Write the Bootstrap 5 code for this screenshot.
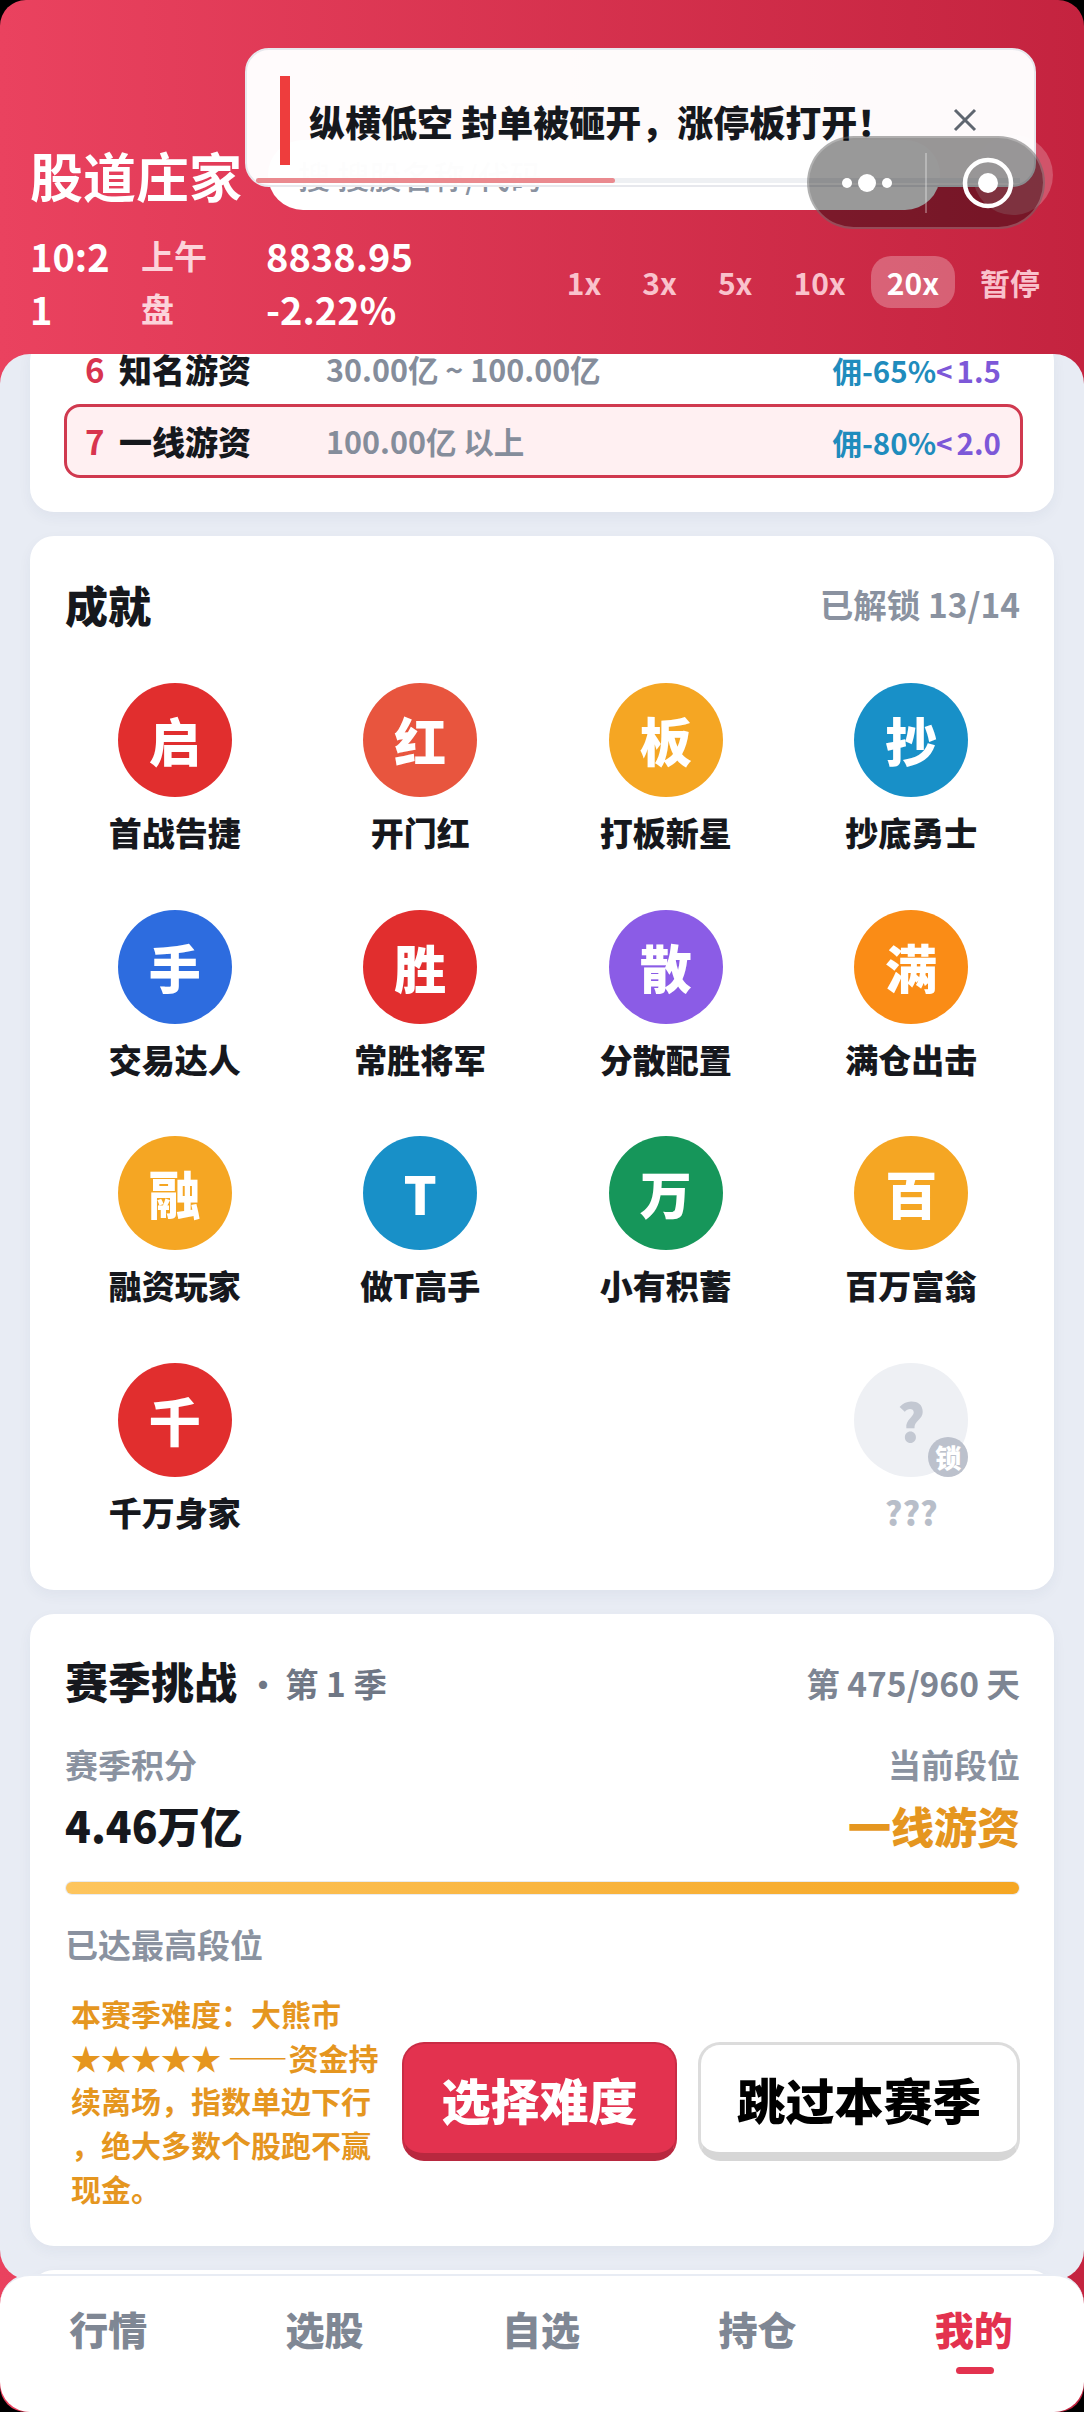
<!DOCTYPE html>
<html lang="zh-CN">
<head>
  <meta charset="UTF-8" />
  <meta name="viewport" content="width=device-width, initial-scale=1" />
  <title>股道庄家</title>
  <link href="https://cdn.jsdelivr.net/npm/bootstrap@5.3.2/dist/css/bootstrap.min.css" rel="stylesheet" />
  <style>
    body {
      background: #000;
      font-family: "Noto Sans CJK SC", "Noto Sans", sans-serif;
      color: #16181d;
      font-weight: 700;
    }
    .app-root {
      position: relative;
      width: 1084px;
      height: 2412px;
      overflow: hidden;
      border-radius: 26px;
      background: linear-gradient(90deg, #ea425f, #c4233f);
    }
    /* header */
    .top-head { height: 354px; padding: 140px 28px 0 30px; color: #fff; }
    .brand-row { height: 70px; }
    .brand-name { font-size: 53px; line-height: 70px; width: 238px; flex-shrink: 0; white-space: nowrap; }
    .search-pill {
      width: 672px; height: 70px; flex-shrink: 0; border-radius: 35px; background: #fff;
      color: #8a92a0; font-size: 32px; padding-left: 30px; line-height: 70px; font-weight: 500;
    }
    .mini-round {
      width: 80px; height: 80px; flex-shrink: 0; margin-left: 33px; border-radius: 50%;
      background: rgba(255, 255, 255, .22);
    }
    .stat-row { margin-top: 19px; line-height: 53px; font-size: 38px; }
    .stat-time { width: 111px; }
    .stat-part { width: 125px; font-size: 33px; color: #fcd3da; }
    .speed-row { gap: 9px; font-size: 30px; color: #f9c2cc; line-height: 52px; }
    .speed-item { padding: 0 16px; border-radius: 20px; height: 52px; }
    .speed-item.is-on { background: rgba(255, 255, 255, .27); color: #fff; }
    /* toast + capsule */
    .notice-box {
      position: absolute; left: 245px; top: 48px; width: 791px; height: 139px; z-index: 5;
      background: rgba(255, 255, 255, .98); border: 2px solid #e7e8ed; border-radius: 24px;
      padding: 24px 0 0 33px;
    }
    .notice-bar { width: 10px; height: 89px; background: #ee3d3d; flex-shrink: 0; }
    .notice-text { font-size: 36px; font-weight: 900; margin-left: 19px; white-space: nowrap; line-height: 89px; padding-top: 3px; }
    .notice-close { margin-left: auto; margin-right: 57px; display: flex; }
    .notice-track { position: absolute; left: 9px; right: 14px; bottom: 2px; height: 5px; background: #eef0f3; }
    .notice-fill { height: 100%; background: #ea8a8f; border-radius: 3px; }
    .wx-capsule {
      position: absolute; left: 807px; top: 136px; width: 238px; height: 93px; z-index: 6;
      background: rgba(0, 0, 0, .4); border: 2px solid rgba(255, 255, 255, .22); border-radius: 47px;
    }
    .wx-half { width: 50%; }
    .wx-half-ring { padding-left: 6px; }
    .wx-line { width: 2px; height: 60px; background: rgba(255, 255, 255, .3); flex-shrink: 0; }
    /* panel */
    .main-panel {
      height: 1926px; overflow: hidden; background: #e8ecf4; border-radius: 30px;
      padding: 0 30px;
    }
    .sheet {
      border: 0; border-radius: 24px; background: #fff; margin-bottom: 24px;
      box-shadow: 0 5px 14px rgba(40, 50, 90, .05);
      padding-left: 35px; padding-right: 34px;
    }
    .sheet-rank { margin-top: -17px; padding-left: 34px; padding-right: 31px; padding-bottom: 34px; }
    .rank-line { height: 66px; margin-bottom: 1px; padding: 0 22px 0 21px; }
    .rank-line.is-current { height: 74px; margin-bottom: 0; border: 3px solid #d0394f; border-radius: 16px; background: #fff0f2; padding: 2px 19px 0 18px; }
    .rank-no { width: 34px; font-size: 33px; color: #d8344e; }
    .rank-name { width: 207px; font-size: 33px; font-weight: 900; white-space: nowrap; }
    .rank-range { font-size: 30.5px; color: #858d9b; white-space: nowrap; }
    .rank-fee { font-size: 29.5px; color: #1f8cbd; white-space: nowrap; margin-left: auto; }
    .rank-lev { color: #7d58d8; }
    .rank-arrow { font-size: 28px; margin: 0 4px 0 0; }
    .head-title { font-size: 43px; line-height: 60px; font-weight: 900; }
    .head-side { font-size: 33.5px; color: #8a92a0; }
    .sheet-ach { padding-top: 38px; padding-bottom: 55.5px; }
    .ach-grid { display: grid; grid-template-columns: repeat(4, 245.5px); row-gap: 54.5px; margin: 49px -12px 0 -13px; }
    .ach-dot {
      position: relative; width: 114px; height: 114px; border-radius: 50%; color: #fff;
      font-size: 52px; font-weight: 900; line-height: 114px; text-align: center; margin: 0 auto 12px;
    }
    .ach-name { font-size: 33px; line-height: 46px; text-align: center; font-weight: 900; white-space: nowrap; }
    .ach-locked { background: #eef0f4; color: #c3c8d2; }
    .ach-lockmark {
      position: absolute; right: 0; bottom: 0; width: 40px; height: 40px; border-radius: 50%;
      background: #bcc1cc; color: #fff; font-size: 26px; line-height: 40px;
    }
    .sheet-season { padding-top: 36px; padding-bottom: 35px; }
    .season-sub { font-size: 33.5px; color: #6f7785; margin-left: 10px; padding-top: 6px; }
    .season-sub-dot { margin-right: 6px; font-size: 32px; }
    .season-day { padding-top: 6px; color: #7d8593; }
    .soft-label { font-size: 33px; line-height: 44px; color: #8a92a0; }
    .season-nums { margin-top: 9px; line-height: 60px; }
    .season-score { font-size: 42.5px; font-weight: 900; }
    .season-rank { font-size: 43px; font-weight: 900; color: #e5961f; }
    .season-bar { height: 14px; border-radius: 7px; margin-top: 26px; background: #e9ebf0; padding: 1px; }
    .season-bar-in { height: 100%; border-radius: 6px; background: linear-gradient(90deg, #fdc55e, #f5a623); }
    .diff-text { width: 337px; padding-left: 6px; font-size: 30px; line-height: 43.7px; color: #e5961f; white-space: nowrap; flex-shrink: 0; }
    .diff-dash { letter-spacing: -7px; margin-right: 1px; font-weight: 900; }
    .act-btn { height: 119px; border-radius: 22px; font-size: 49px; font-weight: 900; line-height: 1; padding: 0; }
    .act-red, .act-red:hover { width: 275px; background: #e3324f; color: #fff; border: 2px solid #c92c45; border-bottom: 8px solid #b8283f; }
    .act-plain, .act-plain:hover { width: 322px; margin-left: 21px; background: #fff; color: #000; border: 3px solid #dcdcdc; border-bottom: 9px solid #d6d6d6; }
    /* bottom nav */
    .tab-bar {
      position: relative; height: 138px; margin-top: -6px; background: #fff; border-radius: 30px;
      border-top: 2px solid #e8ecf4; display: grid; grid-template-columns: repeat(5, 1fr); padding-right: 2px;
    }
    .tab-item { position: relative; text-align: center; font-size: 39px; font-weight: 900; line-height: 56px; padding-top: 24px; color: #7f8794; }
    .tab-item.is-on { color: #e3324f; }
    .tab-mark { position: absolute; left: 50%; margin-left: -18px; top: 91px; width: 38px; height: 7px; border-radius: 4px; background: #e3324f; }
  </style>
</head>
<body>
  <div class="app-root">
    <div class="top-head">
      <div class="brand-row d-flex align-items-center">
        <div class="brand-name">股道庄家</div>
        <div class="search-pill">搜 搜股名称/代码</div>
        <div class="mini-round"></div>
      </div>
      <div class="stat-row d-flex align-items-center">
        <div class="stat-time">10:2<br>1</div>
        <div class="stat-part">上午<br>盘</div>
        <div>8838.95<br>-2.22%</div>
        <div class="speed-row d-flex ms-auto">
          <div class="speed-item">1x</div>
          <div class="speed-item">3x</div>
          <div class="speed-item">5x</div>
          <div class="speed-item">10x</div>
          <div class="speed-item is-on">20x</div>
          <div class="speed-item">暂停</div>
        </div>
      </div>
    </div>

    <div class="notice-box">
      <div class="d-flex align-items-center">
        <div class="notice-bar"></div>
        <div class="notice-text">纵横低空 封单被砸开，涨停板打开！</div>
        <div class="notice-close">
          <svg width="24" height="24" viewBox="0 0 24 24"><path d="M2 2 L22 22 M22 2 L2 22" stroke="#5f6670" stroke-width="3" fill="none"/></svg>
        </div>
      </div>
      <div class="notice-track"><div class="notice-fill" style="width: 47%"></div></div>
    </div>

    <div class="wx-capsule d-flex align-items-center">
      <div class="wx-half d-flex justify-content-center">
        <svg width="52" height="20" viewBox="0 0 52 20"><circle cx="6" cy="10" r="5" fill="#fff"/><circle cx="26" cy="10" r="9" fill="#fff"/><circle cx="46" cy="10" r="5" fill="#fff"/></svg>
      </div>
      <div class="wx-line"></div>
      <div class="wx-half wx-half-ring d-flex justify-content-center">
        <svg width="52" height="52" viewBox="0 0 52 52"><circle cx="26" cy="26" r="23" stroke="#fff" stroke-width="4.5" fill="none"/><circle cx="26" cy="26" r="10" fill="#fff"/></svg>
      </div>
    </div>

    <div class="main-panel">
      <div class="card sheet sheet-rank">
        <div class="rank-line d-flex align-items-center">
          <div class="rank-no">6</div>
          <div class="rank-name">知名游资</div>
          <div class="rank-range">30.00亿 ~ 100.00亿</div>
          <div class="rank-fee">佣-65%<span class="rank-lev"><span class="rank-arrow">&lt;</span>1.5</span></div>
        </div>
        <div class="rank-line is-current d-flex align-items-center">
          <div class="rank-no">7</div>
          <div class="rank-name">一线游资</div>
          <div class="rank-range">100.00亿 以上</div>
          <div class="rank-fee">佣-80%<span class="rank-lev"><span class="rank-arrow">&lt;</span>2.0</span></div>
        </div>
      </div>

      <div class="card sheet sheet-ach">
        <div class="d-flex justify-content-between align-items-center">
          <div class="head-title">成就</div>
          <div class="head-side">已解锁 13/14</div>
        </div>
        <div class="ach-grid">
          <div><div class="ach-dot" style="background:#e12e2e">启</div><div class="ach-name">首战告捷</div></div>
          <div><div class="ach-dot" style="background:#e8553e">红</div><div class="ach-name">开门红</div></div>
          <div><div class="ach-dot" style="background:#f5a623">板</div><div class="ach-name">打板新星</div></div>
          <div><div class="ach-dot" style="background:#1890c8">抄</div><div class="ach-name">抄底勇士</div></div>
          <div><div class="ach-dot" style="background:#2d6cdf">手</div><div class="ach-name">交易达人</div></div>
          <div><div class="ach-dot" style="background:#e12e2e">胜</div><div class="ach-name">常胜将军</div></div>
          <div><div class="ach-dot" style="background:#8b5ce6">散</div><div class="ach-name">分散配置</div></div>
          <div><div class="ach-dot" style="background:#fa8c16">满</div><div class="ach-name">满仓出击</div></div>
          <div><div class="ach-dot" style="background:#f5a623">融</div><div class="ach-name">融资玩家</div></div>
          <div><div class="ach-dot" style="background:#1890c8">T</div><div class="ach-name">做T高手</div></div>
          <div><div class="ach-dot" style="background:#16965a">万</div><div class="ach-name">小有积蓄</div></div>
          <div><div class="ach-dot" style="background:#f5a623">百</div><div class="ach-name">百万富翁</div></div>
          <div><div class="ach-dot" style="background:#e12e2e">千</div><div class="ach-name">千万身家</div></div>
          <div></div>
          <div></div>
          <div>
            <div class="ach-dot ach-locked">?<div class="ach-lockmark">锁</div></div>
            <div class="ach-name" style="color:#b8bec9">???</div>
          </div>
        </div>
      </div>

      <div class="card sheet sheet-season">
        <div class="d-flex align-items-center">
          <div class="head-title">赛季挑战</div>
          <div class="season-sub"><span class="season-sub-dot">•</span>第 1 季</div>
          <div class="head-side season-day ms-auto">第 475/960 天</div>
        </div>
        <div class="d-flex justify-content-between soft-label mt-4 pt-2">
          <div>赛季积分</div>
          <div>当前段位</div>
        </div>
        <div class="d-flex justify-content-between season-nums">
          <div class="season-score">4.46万亿</div>
          <div class="season-rank">一线游资</div>
        </div>
        <div class="season-bar"><div class="season-bar-in" style="width: 100%"></div></div>
        <div class="soft-label" style="margin-top: 27px">已达最高段位</div>
        <div class="d-flex align-items-center" style="margin-top: 26px">
          <div class="diff-text">本赛季难度：大熊市<br>★★★★★ <span class="diff-dash">——</span> 资金持<br>续离场，指数单边下行<br>，绝大多数个股跑不赢<br>现金。</div>
          <button class="btn act-btn act-red">选择难度</button>
          <button class="btn act-btn act-plain">跳过本赛季</button>
        </div>
      </div>

      <div class="card sheet" style="height: 60px"></div>
    </div>

    <div class="tab-bar">
      <div class="tab-item">行情</div>
      <div class="tab-item">选股</div>
      <div class="tab-item">自选</div>
      <div class="tab-item">持仓</div>
      <div class="tab-item is-on">我的<div class="tab-mark"></div></div>
    </div>
  </div>
  <script src="https://cdn.jsdelivr.net/npm/bootstrap@5.3.2/dist/js/bootstrap.bundle.min.js"></script>
</body>
</html>
